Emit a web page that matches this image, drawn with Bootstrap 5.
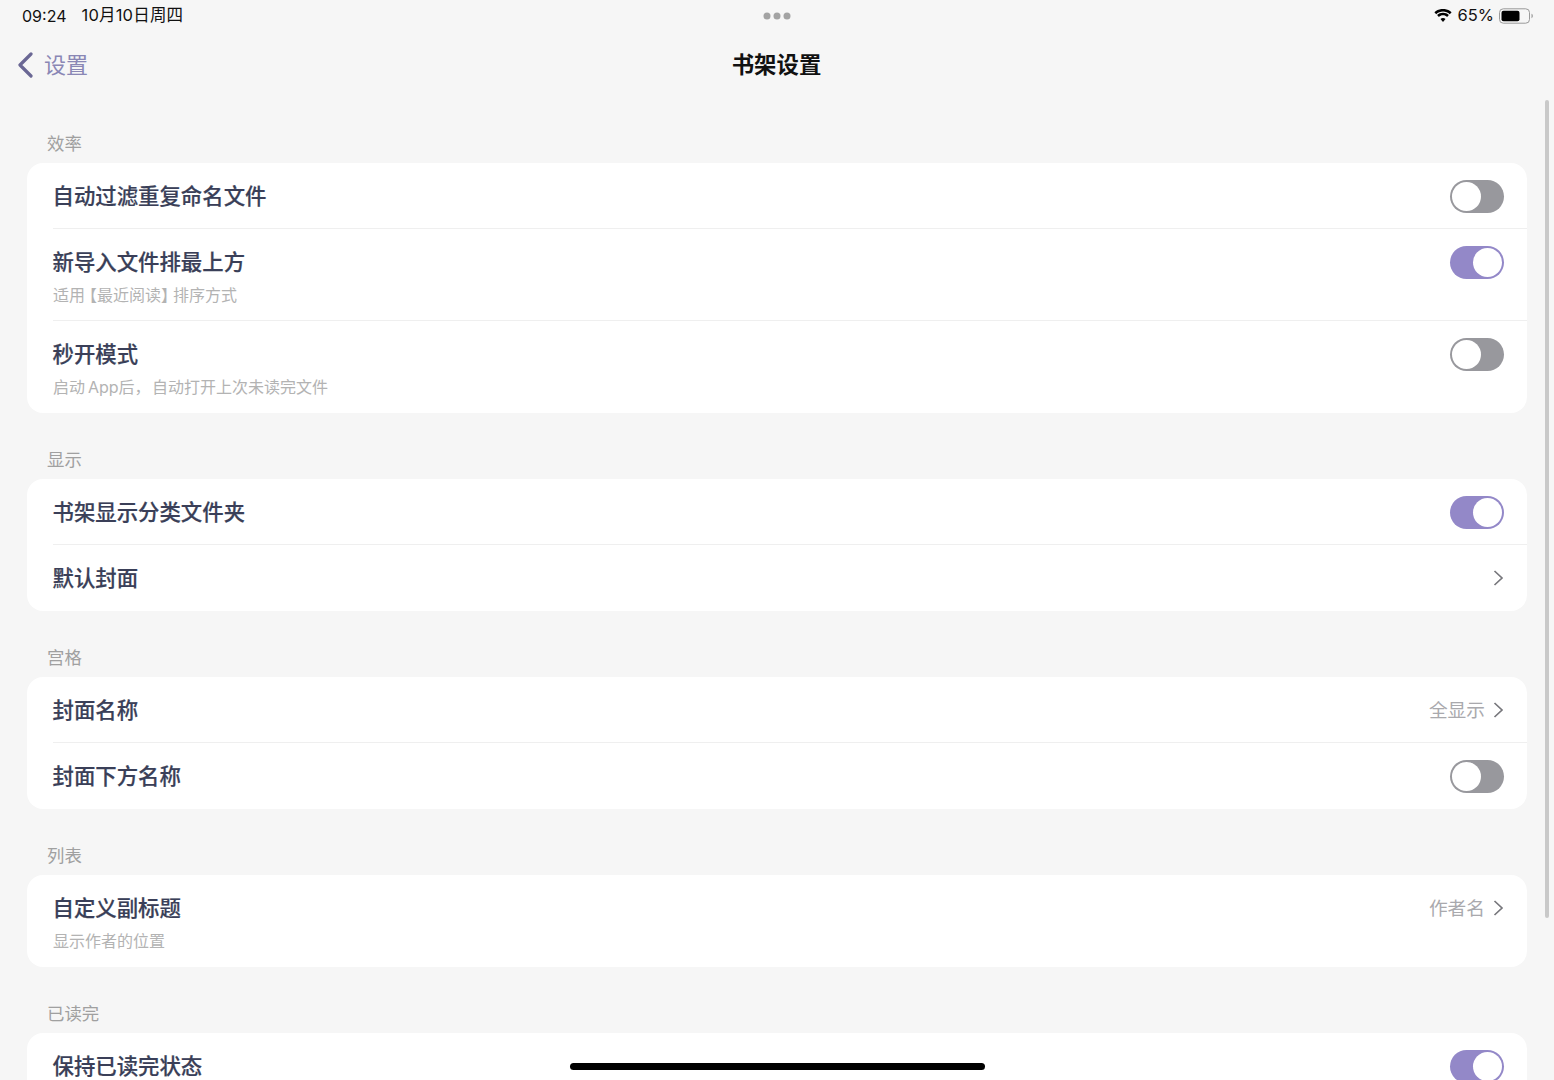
<!DOCTYPE html>
<html lang="zh-CN">
<head>
<meta charset="utf-8">
<title>书架设置</title>
<link href="https://cdn.jsdelivr.net/npm/bootstrap@5.3.0/dist/css/bootstrap.min.css" rel="stylesheet">
<style>
html,body{height:1080px;overflow:hidden;}
body{background:#f6f6f6;font-family:"Inter","Noto Sans CJK SC",sans-serif;position:relative;}
.status-bar{height:31px;padding:0 21px 0 22px;font-size:16px;color:#111;}
.status-date{margin-left:15px;font-size:16.5px;letter-spacing:.2px;}
.status-dots{gap:3px;}
.status-dots i{display:block;width:7px;height:7px;border-radius:50%;background:#a3a3a3;}
.status-pct{margin:0 5px 0 6px;font-size:16.5px;}
.top-bar{height:68px;padding:0 0 1px 17px;}
.back-link{color:#8a87b5;font-size:22px;gap:10px;line-height:1;text-decoration:none;}
.page-title{font-size:22.4px;font-weight:600;color:#111;line-height:1;}
.top-bar-title{left:0;right:1px;top:31px;height:68px;}
.settings-wrap{padding:0 27px;}
.group-label{font-size:17.4px;color:#a0a0a0;line-height:26px;height:66px;padding:34px 0 0 20px;}
.first-label{height:64px;padding-top:32px;}
.settings-card{background:#fff;border-radius:16px;overflow:hidden;}
.set-row{padding:0 23px 0 26px;height:66px;position:relative;}
.set-row.tall{height:92px;align-items:flex-start!important;}
.set-row + .set-row::before{content:"";position:absolute;left:26px;right:0;top:-1px;height:1px;background:#efefef;}
.row-title{font-size:21.4px;font-weight:500;color:#3a3f58;line-height:30px;white-space:nowrap;margin-left:-.5px;-webkit-text-stroke:.2px #3a3f58;}
.tall .row-main{padding-top:18px;}
.tall .row-end{padding-top:17px;}
.tall .row-value{padding-top:24px;}
.row-sub{font-size:16px;color:#b3b3b3;line-height:24px;margin-top:6px;white-space:nowrap;}
.brk-l{font-feature-settings:"halt";padding-left:4px;}
.brk-r{font-feature-settings:"halt";padding-right:4px;}
.row-value{font-size:18.7px;color:#a9a9ad;gap:8px;line-height:1;}
.row-value span{position:relative;top:1px;}
.tgl{display:block;width:54px;height:33px;border-radius:17px;background:#98989d;position:relative;}
.tgl::after{content:"";position:absolute;left:2px;top:2px;width:29px;height:29px;border-radius:50%;background:#fff;}
.tgl.on{background:#9388c8;}
.tgl.on::after{left:23px;}
.scroll-thumb{position:absolute;right:5px;top:100px;width:4px;height:818px;border-radius:2px;background:#c9c9c9;}
.home-bar{position:absolute;left:570px;top:1063px;width:415px;height:7px;border-radius:4px;background:#000;}
</style>
</head>
<body>
<div class="status-bar d-flex align-items-center justify-content-between position-relative">
  <div class="d-flex align-items-center"><span>09:24</span><span class="status-date">10月10日周四</span></div>
  <div class="status-dots d-flex position-absolute top-50 start-50 translate-middle"><i></i><i></i><i></i></div>
  <div class="d-flex align-items-center">
    <svg width="18" height="14" viewBox="0 0 18 14"><path d="M9 2.500c2.600 0 5 1 6.800 2.700l1.800-1.900C15.300 1.100 12.300-.1 9-.1S2.700 1.100.4 3.300l1.800 1.900C4 3.500 6.400 2.500 9 2.500z" fill="#000"/><path d="M9 6.300c1.600 0 3 .6 4.100 1.600l1.800-1.900C13.300 4.500 11.300 3.700 9 3.700s-4.300.8-5.900 2.300l1.800 1.900C6 6.900 7.400 6.300 9 6.300z" fill="#000"/><path d="M9 8.900c-1 0-1.900.4-2.500 1L9 13l2.500-3.100c-.6-.6-1.500-1-2.500-1z" fill="#000"/></svg>
    <span class="status-pct">65%</span>
    <svg width="34" height="16" viewBox="0 0 34 16"><rect x=".5" y=".8" width="30" height="14.400" rx="3.800" fill="none" stroke="#9a9a9a"/><rect x="2.500" y="2.800" width="18" height="10.400" rx="2" fill="#000"/><path d="M32.500 5.800c.9.300 1.300 1.200 1.300 2.200s-.4 1.900-1.300 2.200z" fill="#9a9a9a"/></svg>
  </div>
</div>
<div class="top-bar d-flex align-items-center">
  <a href="#" class="back-link d-flex align-items-center">
    <svg width="17" height="26" viewBox="0 0 17 26"><path d="M14 2 3 13l11 11" fill="none" stroke="#6a6794" stroke-width="3.200" stroke-linecap="round" stroke-linejoin="round"/></svg>
    <span>设置</span>
  </a>
</div>
<div class="top-bar-title position-absolute d-flex align-items-center justify-content-center"><span class="page-title">书架设置</span></div>

<div class="settings-wrap">
  <div class="group-label first-label">效率</div>
  <div class="settings-card">
    <div class="set-row d-flex align-items-center justify-content-between"><div class="row-title">自动过滤重复命名文件</div><span class="tgl"></span></div>
    <div class="set-row tall d-flex align-items-center justify-content-between">
      <div class="row-main"><div class="row-title">新导入文件排最上方</div><div class="row-sub">适用<span class="brk-l">【</span>最近阅读<span class="brk-r">】</span>排序方式</div></div>
      <div class="row-end"><span class="tgl on"></span></div>
    </div>
    <div class="set-row tall d-flex align-items-center justify-content-between">
      <div class="row-main"><div class="row-title">秒开模式</div><div class="row-sub">启动&#8201;App后，&#8202;自动打开上次未读完文件</div></div>
      <div class="row-end"><span class="tgl"></span></div>
    </div>
  </div>

  <div class="group-label">显示</div>
  <div class="settings-card">
    <div class="set-row d-flex align-items-center justify-content-between"><div class="row-title">书架显示分类文件夹</div><span class="tgl on"></span></div>
    <div class="set-row d-flex align-items-center justify-content-between"><div class="row-title">默认封面</div>
      <div class="row-value d-flex align-items-center"><svg width="11" height="16" viewBox="0 0 11 16"><path d="m1.500 1 7.500 7-7.500 7" fill="none" stroke="#77777c" stroke-width="1.700"/></svg></div></div>
  </div>

  <div class="group-label">宫格</div>
  <div class="settings-card">
    <div class="set-row d-flex align-items-center justify-content-between"><div class="row-title">封面名称</div>
      <div class="row-value d-flex align-items-center"><span>全显示</span><svg width="11" height="16" viewBox="0 0 11 16"><path d="m1.500 1 7.500 7-7.500 7" fill="none" stroke="#77777c" stroke-width="1.700"/></svg></div></div>
    <div class="set-row d-flex align-items-center justify-content-between"><div class="row-title">封面下方名称</div><span class="tgl"></span></div>
  </div>

  <div class="group-label">列表</div>
  <div class="settings-card">
    <div class="set-row tall d-flex align-items-center justify-content-between">
      <div class="row-main"><div class="row-title">自定义副标题</div><div class="row-sub">显示作者的位置</div></div>
      <div class="row-value d-flex align-items-center"><span>作者名</span><svg width="11" height="16" viewBox="0 0 11 16"><path d="m1.500 1 7.500 7-7.500 7" fill="none" stroke="#77777c" stroke-width="1.700"/></svg></div>
    </div>
  </div>

  <div class="group-label">已读完</div>
  <div class="settings-card">
    <div class="set-row d-flex align-items-center justify-content-between"><div class="row-title">保持已读完状态</div><span class="tgl on"></span></div>
  </div>
</div>
<div class="scroll-thumb"></div>
<div class="home-bar"></div>
<script src="https://cdn.jsdelivr.net/npm/bootstrap@5.3.0/dist/js/bootstrap.bundle.min.js"></script>
</body>
</html>
